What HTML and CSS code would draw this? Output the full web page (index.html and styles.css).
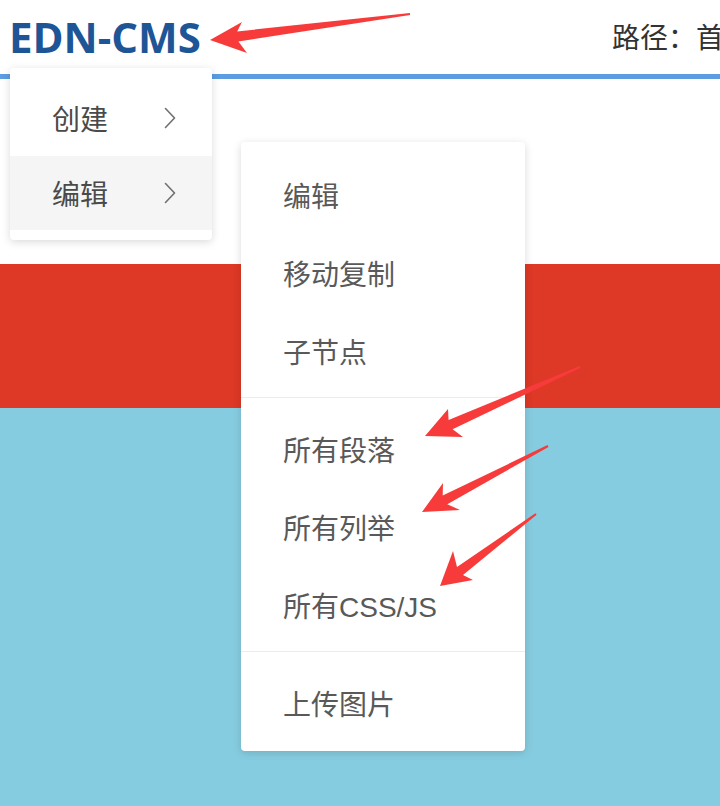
FILE: index.html
```html
<!DOCTYPE html>
<html lang="zh-CN">
<head>
<meta charset="utf-8">
<title>EDN-CMS</title>
<link rel="stylesheet" href="styles.css">
</head>
<body>
<div class="page">
  <header class="topbar">
    <div class="logo">EDN-CMS</div>
    <div class="crumb">路径：首页</div>
  </header>
  <div class="band band-white"></div>
  <div class="band band-red"></div>
  <div class="band band-blue"></div>

  <ul class="menu menu-main">
    <li class="item">
      <span>创建</span>
      <svg class="chev" viewBox="0 0 12 22" width="12" height="22"><polyline points="1.5,1.5 10.5,11 1.5,20.5"/></svg>
    </li>
    <li class="item active">
      <span>编辑</span>
      <svg class="chev" viewBox="0 0 12 22" width="12" height="22"><polyline points="1.5,1.5 10.5,11 1.5,20.5"/></svg>
    </li>
  </ul>

  <ul class="menu menu-sub">
    <li class="item">编辑</li>
    <li class="item">移动复制</li>
    <li class="item">子节点</li>
    <li class="divider"></li>
    <li class="item">所有段落</li>
    <li class="item">所有列举</li>
    <li class="item">所有CSS/JS</li>
    <li class="divider"></li>
    <li class="item">上传图片</li>
  </ul>

  <svg class="arrows" viewBox="0 0 720 806" width="720" height="806">
    <polygon points="210,40 242,22 237.2,31.4 409.9,13 410.1,15 238.4,41.4 247,53"/>
    <polygon points="425,436 448,409 448.6,420 579.6,366.1 580.4,367.9 452.6,429.2 463,437"/>
    <polygon points="422,512 443,483 442.7,495.5 547.5,445.1 548.5,446.9 447.3,504.3 460,510"/>
    <polygon points="440,586 453,551 457,567 535.4,513.2 536.6,514.8 463,575 473,580"/>
  </svg>
</div>
</body>
</html>
```

FILE: styles.css
```css
* { box-sizing: border-box; }
html, body {
  margin: 0;
  padding: 0;
  width: 720px;
  height: 806px;
  overflow: hidden;
  background: #ffffff;
  font-family: "Noto Sans CJK SC", "Liberation Sans", sans-serif;
}
.page {
  position: relative;
  width: 720px;
  height: 806px;
  display: flex;
  flex-direction: column;
  overflow: hidden;
}
.topbar {
  height: 79px;
  flex: none;
  display: grid;
  grid-template-columns: 612px 108px;
  align-items: center;
  border-bottom: 5px solid #5b9de0;
}
.logo {
  padding-left: 9px;
  padding-bottom: 1px;
  font-family: "Open Sans", "Noto Sans", sans-serif;
  font-weight: 700;
  font-size: 42px;
  color: #1d5596;
}
.crumb {
  font-size: 28px;
  color: #333333;
  white-space: nowrap;
  overflow: hidden;
  padding-bottom: 2px;
}
.band { flex: none; }
.band-white { height: 185px; background: #ffffff; }
.band-red { height: 144px; background: #de3826; }
.band-blue { flex: 1; background: #86cce0; }

.menu {
  position: absolute;
  margin: 0;
  list-style: none;
  background: #ffffff;
  border-radius: 4px;
  box-shadow: 0 2px 8px rgba(0, 0, 0, 0.15);
}
.menu .item {
  display: flex;
  align-items: center;
  font-size: 28px;
  color: #595959;
  white-space: nowrap;
  font-family: "Liberation Sans", "Noto Sans CJK SC", sans-serif;
}
.menu-main {
  left: 10px;
  top: 68px;
  width: 202px;
  padding: 13px 0 10px;
}
.menu-main .item {
  height: 74.5px;
  padding: 0 36px 0 42px;
  justify-content: space-between;
  color: #4a4a4a;
}
.menu-main .item.active { background: #f5f5f5; }
.chev polyline {
  fill: none;
  stroke: #707070;
  stroke-width: 1.6;
  stroke-linecap: round;
  stroke-linejoin: round;
}
.menu-sub {
  left: 241px;
  top: 142px;
  width: 284px;
  padding: 14px 0 9px;
}
.menu-sub .item {
  height: 78px;
  padding-left: 42px;
}
.menu-sub .divider {
  height: 1px;
  margin: 7px 0 12px;
  background: #ececec;
}
.arrows {
  position: absolute;
  left: 0;
  top: 0;
  pointer-events: none;
}
.arrows polygon { fill: #f73b3b; }
```
